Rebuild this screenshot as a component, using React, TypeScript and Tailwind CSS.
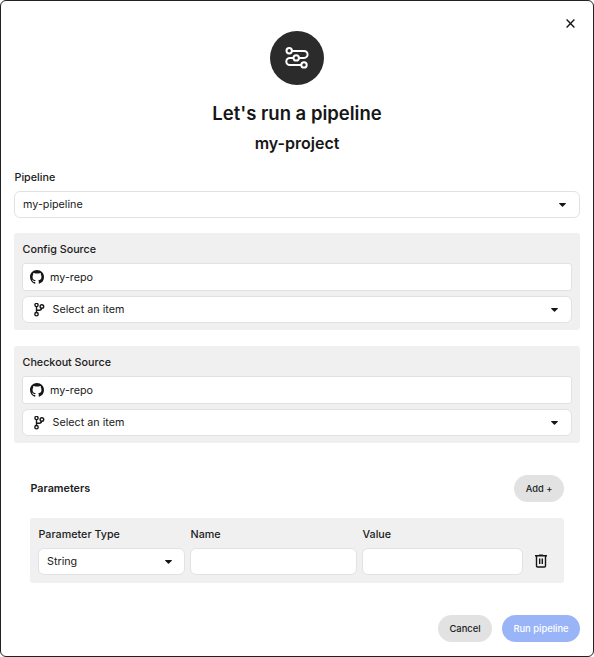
import React from "react";

const Caret = () => (
  <svg className="h-[4px] w-[7px] shrink-0" viewBox="0 0 7 4">
    <path d="M0.5 0h6c.4 0 .6.5.3.8L4 3.5a.7.7 0 0 1-1 0L.2.8C-.1.5.1 0 .5 0Z" fill="#161616" />
  </svg>
);

const GithubMark = () => (
  <svg className="h-[14px] w-[14px] shrink-0" viewBox="0 0 16 16" fill="#161616">
    <path d="M8 0C3.58 0 0 3.58 0 8c0 3.54 2.29 6.53 5.47 7.59.4.07.55-.17.55-.38 0-.19-.01-.82-.01-1.49-2.01.37-2.53-.49-2.69-.94-.09-.23-.48-.94-.82-1.13-.28-.15-.68-.52-.01-.53.63-.01 1.08.58 1.23.82.72 1.21 1.87.87 2.33.66.07-.52.28-.87.51-1.07-1.78-.2-3.64-.89-3.64-3.95 0-.87.31-1.59.82-2.15-.08-.2-.36-1.02.08-2.12 0 0 .67-.21 2.2.82.64-.18 1.32-.27 2-.27s1.36.09 2 .27c1.53-1.04 2.2-.82 2.2-.82.44 1.1.16 1.92.08 2.12.51.56.82 1.27.82 2.15 0 3.07-1.87 3.75-3.65 3.95.29.25.54.73.54 1.48 0 1.07-.01 1.93-.01 2.2 0 .21.15.46.55.38A8.01 8.01 0 0 0 16 8c0-4.42-3.58-8-8-8Z" />
  </svg>
);

const BranchIcon = () => (
  <svg className="h-[14px] w-[12px] shrink-0" viewBox="0 0 12 14" fill="none" stroke="#161616" strokeWidth="1.4">
    <circle cx="3.5" cy="2" r="1.6" />
    <circle cx="8.9" cy="3.5" r="1.8" />
    <circle cx="3.5" cy="11.2" r="1.7" />
    <path d="M3.5 3.7v5.9M8.6 5.2c-.2 1.5-1 2.1-2.3 2.1H3.5" />
  </svg>
);

const PipelineIcon = () => (
  <svg className="h-[24px] w-[24px]" viewBox="0 0 24 24" fill="none" stroke="#fff" strokeWidth="2">
    <circle cx="4.2" cy="4.8" r="2.7" />
    <circle cx="11.2" cy="11.9" r="2.7" />
    <circle cx="19" cy="18.9" r="2.7" />
    <path d="M7 4.9h12.1a3.5 3.5 0 0 1 0 7h-5M8.5 12H4.8a3.5 3.5 0 0 0 0 7h11.5" />
  </svg>
);

const TrashIcon = () => (
  <svg className="h-[14px] w-[12px]" viewBox="0 0 12 14" fill="none" stroke="#161616" strokeWidth="1.4">
    <path d="M0 1.8h12M3.9 1.1h4.2M1.5 2v9.9c0 .7.4 1.1 1.1 1.1h6.8c.7 0 1.1-.4 1.1-1.1V2M4.7 4.5V10M7.3 4.5V10" />
  </svg>
);

const field = "flex h-[27px] items-center border border-[#e2e2e2] bg-white rounded-md";

function SourcePanel({ title }: { title: string }) {
  return (
    <section className="mb-4 flex h-[97px] flex-col rounded-[3px] bg-[#f0f0f0] px-2 pt-[9px]">
      <h3 className="h-[21px] pl-[0.5px] leading-[16px] font-medium">{title}</h3>
      <div className="flex h-7 items-center gap-[6.5px] rounded-[3px] border border-[#e2e2e2] bg-white pl-[6.5px]">
        <GithubMark />
        <span className="pt-px">my-repo</span>
      </div>
      <div className={`${field} mt-[5px] pr-[13px] pl-[10px]`}>
        <BranchIcon />
        <span className="ml-[7.5px] flex-1">Select an item</span>
        <Caret />
      </div>
    </section>
  );
}

export default function App() {
  return (
    <main className="flex h-[657px] w-[594px] flex-col rounded-[6px] border border-[#222] bg-white px-[13px] font-['Inter',sans-serif] text-[10.75px] leading-[16px] text-[#202020]">
      <div className="flex h-[30px] items-end justify-end pr-[5px] pb-[3px]">
        <svg className="h-[9px] w-[9px]" viewBox="0 0 9 9" stroke="#161616" strokeWidth="1.4">
          <path d="M.6.6l7.8 7.8M8.4.6L.6 8.4" />
        </svg>
      </div>
      <header className="flex h-[136px] flex-col items-center text-[#161616]">
        <div className="flex h-[53.5px] w-[53.5px] items-center justify-center rounded-full bg-[#2b2b2b]">
          <PipelineIcon />
        </div>
        <h1 className="mt-4 text-[18.5px] leading-[24px] font-semibold">Let's run a pipeline</h1>
        <h2 className="mt-2 text-base leading-[20px] font-semibold">my-project</h2>
      </header>
      <label className="mt-[3px] h-[21px] pl-[0.5px] font-medium">Pipeline</label>
      <div className={`${field} mb-[15px] justify-between pr-[13px] pl-2`}>
        <span>my-pipeline</span>
        <Caret />
      </div>
      <SourcePanel title="Config Source" />
      <SourcePanel title="Checkout Source" />
      <section className="mt-4 px-4">
        <div className="flex h-[27px] items-center justify-between">
          <h3 className="pt-px pl-[0.5px] font-semibold">Parameters</h3>
          <button className="h-[27px] w-[50px] rounded-full bg-[#e2e2e2] text-[9.3px] font-medium">Add +</button>
        </div>
        <div className="mt-4 flex h-[65px] gap-[5px] rounded-[3px] bg-[#f0f0f0] pt-[9px] pl-2">
          <div className="w-[147px]">
            <div className="h-[21px] pl-[0.5px] font-medium">Parameter Type</div>
            <div className={`${field} justify-between pr-3 pl-2`}>
              <span>String</span>
              <Caret />
            </div>
          </div>
          <div className="w-[167px]">
            <div className="h-[21px] pl-[0.5px] font-medium">Name</div>
            <div className={field} />
          </div>
          <div className="w-[161px]">
            <div className="h-[21px] pl-[0.5px] font-medium">Value</div>
            <div className={field} />
          </div>
          <div className="mt-[27px] ml-[7px]">
            <TrashIcon />
          </div>
        </div>
      </section>
      <footer className="mt-8 flex justify-end gap-[10px] text-[9.4px] font-medium">
        <button className="h-[27px] w-[54px] rounded-full bg-[#e2e2e2]">Cancel</button>
        <button className="h-[27px] w-[78px] rounded-full bg-[#9ab4f8] text-white">Run pipeline</button>
      </footer>
    </main>
  );
}
